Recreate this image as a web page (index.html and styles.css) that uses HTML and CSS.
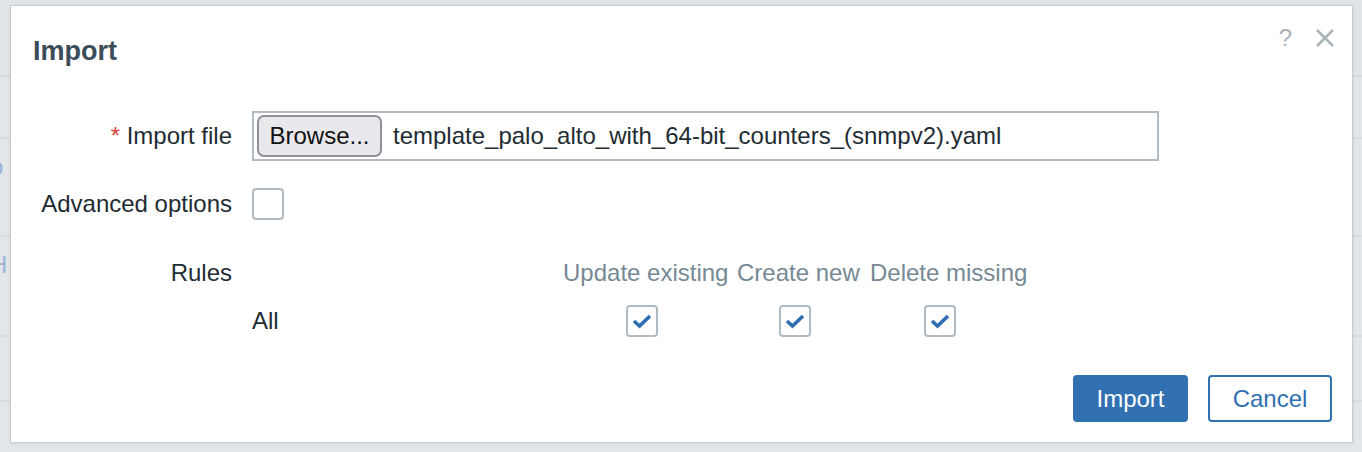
FILE: index.html
```html
<!DOCTYPE html>
<html lang="en">
<head>
<meta charset="utf-8">
<title>Import</title>
<link rel="stylesheet" href="styles.css">
</head>
<body>
<div class="page">
  <div class="page-head"></div>
  <div class="page-row r1"></div>
  <div class="page-row r2"><span class="frag">o</span></div>
  <div class="page-row r3"><span class="frag">H</span></div>
  <div class="page-row r4"></div>
  <div class="page-row r5"></div>
</div>
<div class="overlay"></div>
<div class="dialog">
  <div class="dialog-head">
    <h2 class="title">Import</h2>
    <div class="head-icons">
      <span class="help">?</span>
      <svg class="close" width="20" height="20" viewBox="0 0 20 20"><path d="M2 2 L18 18 M18 2 L2 18" stroke="#a9b4bb" stroke-width="2.6" fill="none"/></svg>
    </div>
  </div>
  <div class="form">
    <label class="lbl"><span class="req">*</span> Import file</label>
    <div class="file">
      <span class="browse">Browse...</span>
      <span class="fname">template_palo_alto_with_64-bit_counters_(snmpv2).yaml</span>
    </div>

    <label class="lbl">Advanced options</label>
    <div><span class="cb"></span></div>

    <label class="lbl lbl-top">Rules</label>
    <div class="rules">
      <span class="rcell"></span>
      <span class="rhead c1">Update existing</span>
      <span class="rhead c2">Create new</span>
      <span class="rhead c3">Delete missing</span>
      <span class="rcell all">All</span>
      <span class="rcell c1"><span class="cb on s1"><svg width="20" height="15" viewBox="0 0 20 15"><path d="M2 7 L7.5 12 L18 2" stroke="#2f6fb1" stroke-width="3.6" fill="none" stroke-linejoin="miter"/></svg></span></span>
      <span class="rcell c2"><span class="cb on s2"><svg width="20" height="15" viewBox="0 0 20 15"><path d="M2 7 L7.5 12 L18 2" stroke="#2f6fb1" stroke-width="3.6" fill="none" stroke-linejoin="miter"/></svg></span></span>
      <span class="rcell c3"><span class="cb on s3"><svg width="20" height="15" viewBox="0 0 20 15"><path d="M2 7 L7.5 12 L18 2" stroke="#2f6fb1" stroke-width="3.6" fill="none" stroke-linejoin="miter"/></svg></span></span>
    </div>
  </div>
  <div class="footer">
    <button class="btn primary">Import</button>
    <button class="btn secondary">Cancel</button>
  </div>
</div>
</body>
</html>
```
FILE: styles.css
```css
html, body {
  margin: 0;
  padding: 0;
}
body {
  width: 1362px;
  height: 452px;
  overflow: hidden;
  position: relative;
  background: #e4e7ea;
  font-family: "Liberation Sans", Arial, sans-serif;
}
.page {
  display: flex;
  flex-direction: column;
}
.page-head {
  height: 75px;
  border-bottom: 2px solid #d3d8dc;
  background: #e1e4e7;
}
.page-row {
  border-bottom: 2px solid #d5dadd;
  position: relative;
  color: #7fa6cc;
  font-size: 24px;
}
.r1 { height: 60px; }
.r2 { height: 96px; }
.r3 { height: 98px; }
.r4 { height: 63px; }
.r5 { height: 60px; }
.frag {
  position: absolute;
  left: -10px;
  top: 14px;
}
.overlay {
  position: absolute;
  inset: 0;
  background: rgba(225, 229, 232, 0.25);
}
.dialog {
  position: absolute;
  left: 10px;
  top: 5px;
  width: 1341px;
  height: 436px;
  background: #fff;
  border: 1px solid #c6ccd1;
  box-shadow: 0 1px 3px rgba(0, 0, 0, 0.08);
  display: flex;
  flex-direction: column;
}
.dialog-head {
  position: relative;
  padding: 28px 22px 0;
}
.title {
  margin: 0;
  font-size: 27px;
  line-height: 34px;
  font-weight: bold;
  color: #3c4d59;
}
.head-icons {
  position: absolute;
  top: 16px;
  right: 17px;
  display: flex;
  align-items: center;
  gap: 23px;
}
.help {
  font-size: 24px;
  color: #a9b4bb;
  line-height: 32px;
}
.close {
  display: block;
}
.form {
  margin-top: 43px;
  display: grid;
  grid-template-columns: 221px 1fr;
  column-gap: 20px;
  row-gap: 27px;
  align-items: center;
}
.lbl {
  text-align: right;
  font-size: 24px;
  line-height: 32px;
  color: #1f2c33;
}
.lbl-top {
  align-self: start;
  margin-top: 10px;
}
.req {
  color: #d64541;
}
.file {
  width: 900px;
  height: 46px;
  border: 2px solid #b1bdc5;
  display: flex;
  align-items: center;
  padding-left: 3px;
  box-sizing: content-box;
}
.browse {
  box-sizing: border-box;
  height: 42px;
  width: 125px;
  border: 2px solid #8f8f9d;
  border-radius: 7px;
  background: #e9e9ed;
  font-size: 24px;
  line-height: 38px;
  text-align: center;
  color: #111;
}
.fname {
  margin-left: 11px;
  font-size: 24px;
  color: #1f2c33;
}
.cb {
  box-sizing: border-box;
  display: flex;
  align-items: center;
  justify-content: center;
  width: 32px;
  height: 32px;
  border: 2px solid #b0bcc4;
  border-radius: 4px;
  background: #fff;
}
.rules {
  margin-top: 10px;
  display: grid;
  grid-template-columns: 311px 174px 133px 160px;
  grid-template-rows: 32px 32px;
  row-gap: 16px;
  align-items: center;
}
.rhead {
  font-size: 24px;
  color: #768994;
  text-align: left;
  white-space: nowrap;
}
.rcell {
  display: flex;
}
.all {
  font-size: 24px;
  color: #1f2c33;
}
.s1 { margin-left: 63px; }
.s2 { margin-left: 42px; }
.s3 { margin-left: 54px; }
.footer {
  margin-top: auto;
  padding: 0 20px 20px 0;
  display: flex;
  justify-content: flex-end;
  gap: 20px;
}
.btn {
  box-sizing: border-box;
  height: 47px;
  border-radius: 4px;
  font-family: "Liberation Sans", Arial, sans-serif;
  font-size: 24px;
  padding: 0;
  cursor: pointer;
}
.primary {
  width: 115px;
  background: #3170b1;
  border: 2px solid #3170b1;
  color: #fff;
}
.secondary {
  width: 124px;
  background: #fff;
  border: 2px solid #3170b1;
  color: #3170b1;
}
```
